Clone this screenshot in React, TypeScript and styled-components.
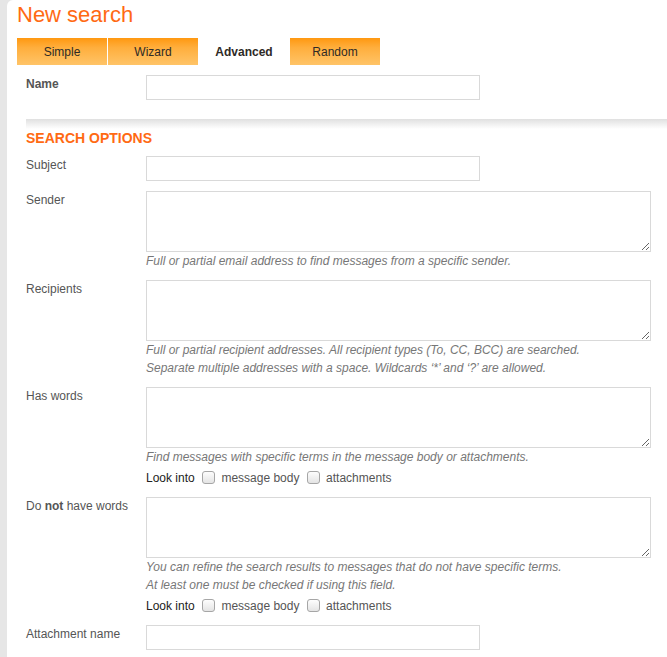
import React from "react";
import styled, { createGlobalStyle } from "styled-components";

const GlobalStyle = createGlobalStyle`
  html, body {
    margin: 0;
    padding: 0;
    background: #e6e6e6;
  }
  body {
    font-family: "Liberation Sans", Arial, sans-serif;
    font-size: 12px;
    color: #555;
  }
`;

const Page = styled.div`
  margin-left: 7px;
  min-height: 657px;
  background: #fff;
  border-top-left-radius: 6px;
  padding: 2px 0 0 10px;
  box-sizing: border-box;
  overflow: hidden;
`;

const Title = styled.h1`
  margin: 0;
  font-size: 22px;
  line-height: 26px;
  font-weight: normal;
  color: #ff6a13;
`;

const Tabs = styled.div`
  display: flex;
  gap: 1px;
  margin-top: 10px;
  height: 27px;
`;

const Tab = styled.div<{ $active?: boolean }>`
  width: 90px;
  display: flex;
  align-items: center;
  justify-content: center;
  font-size: 12px;
  color: #2e2a26;
  font-weight: ${(p) => (p.$active ? "bold" : "normal")};
  background: ${(p) =>
    p.$active
      ? "#fff"
      : "linear-gradient(to bottom, #ff9810 0%, #ffae3c 35%, #ffc468 100%)"};
  cursor: pointer;
`;

const Form = styled.div`
  display: flex;
  flex-direction: column;
  margin-top: 10px;
  padding-left: 9px;
`;

const Row = styled.div`
  display: flex;
  align-items: flex-start;
  margin-bottom: 10px;
`;

const Label = styled.div<{ $bold?: boolean }>`
  width: 120px;
  flex: none;
  padding-top: 1px;
  line-height: 16px;
  color: #555;
  font-weight: ${(p) => (p.$bold ? "bold" : "normal")};
`;

const Field = styled.div`
  display: flex;
  flex-direction: column;
  align-items: flex-start;
`;

const TextInput = styled.input`
  width: 334px;
  height: 25px;
  box-sizing: border-box;
  margin: 0;
  padding: 2px 5px;
  border: 1px solid #d9d9d9;
  font: inherit;
  color: #333;
  outline: none;
`;

const TextArea = styled.textarea`
  display: block;
  width: 505px;
  height: 61px;
  box-sizing: border-box;
  margin: 0;
  padding: 3px 5px;
  border: 1px solid #d9d9d9;
  font: inherit;
  color: #333;
  resize: both;
  outline: none;
`;

const Hint = styled.div`
  font-style: italic;
  color: #777;
  line-height: 18px;
`;

const LookRow = styled.div`
  height: 21px;
  box-sizing: border-box;
  padding-top: 3px;
  line-height: 18px;
  color: #222;
  white-space: pre;
`;

const CheckLabel = styled.label`
  color: #555;
`;

const Check = styled.input.attrs({ type: "checkbox" })`
  appearance: none;
  -webkit-appearance: none;
  box-sizing: border-box;
  width: 13px;
  height: 13px;
  margin: 0 3px 0 4px;
  border: 1px solid #a6a6a6;
  border-radius: 3px;
  background: linear-gradient(to bottom, #fdfdfd, #e4e4e4);
  vertical-align: -2px;
`;

const Separator = styled.div`
  height: 10px;
  margin-top: 9px;
  background: linear-gradient(to bottom, #e0e0e0, #ffffff);
`;

const Heading = styled.h2`
  margin: 1px 0 10px;
  font-size: 14px;
  line-height: 16px;
  font-weight: bold;
  color: #ff6a13;
  text-transform: uppercase;
`;

const LookInto: React.FC = () => (
  <LookRow>
    Look into <Check />
    <CheckLabel> message body </CheckLabel>
    <Check />
    <CheckLabel> attachments</CheckLabel>
  </LookRow>
);

export default function App() {
  return (
    <>
      <GlobalStyle />
      <Page>
        <Title>New search</Title>
        <Tabs>
          <Tab>Simple</Tab>
          <Tab>Wizard</Tab>
          <Tab $active>Advanced</Tab>
          <Tab>Random</Tab>
        </Tabs>
        <Form>
          <Row>
            <Label $bold>Name</Label>
            <Field>
              <TextInput />
            </Field>
          </Row>
          <Separator />
          <Heading>Search options</Heading>
          <Row>
            <Label>Subject</Label>
            <Field>
              <TextInput />
            </Field>
          </Row>
          <Row>
            <Label>Sender</Label>
            <Field>
              <TextArea />
              <Hint>Full or partial email address to find messages from a specific sender.</Hint>
            </Field>
          </Row>
          <Row>
            <Label>Recipients</Label>
            <Field>
              <TextArea />
              <Hint>
                Full or partial recipient addresses. All recipient types (To, CC, BCC) are searched.
              </Hint>
              <Hint>Separate multiple addresses with a space. Wildcards ‘*’ and ‘?’ are allowed.</Hint>
            </Field>
          </Row>
          <Row>
            <Label>Has words</Label>
            <Field>
              <TextArea />
              <Hint>Find messages with specific terms in the message body or attachments.</Hint>
              <LookInto />
            </Field>
          </Row>
          <Row>
            <Label>
              Do <b>not</b> have words
            </Label>
            <Field>
              <TextArea />
              <Hint>You can refine the search results to messages that do not have specific terms.</Hint>
              <Hint>At least one must be checked if using this field.</Hint>
              <LookInto />
            </Field>
          </Row>
          <Row>
            <Label>Attachment name</Label>
            <Field>
              <TextInput />
            </Field>
          </Row>
        </Form>
      </Page>
    </>
  );
}
